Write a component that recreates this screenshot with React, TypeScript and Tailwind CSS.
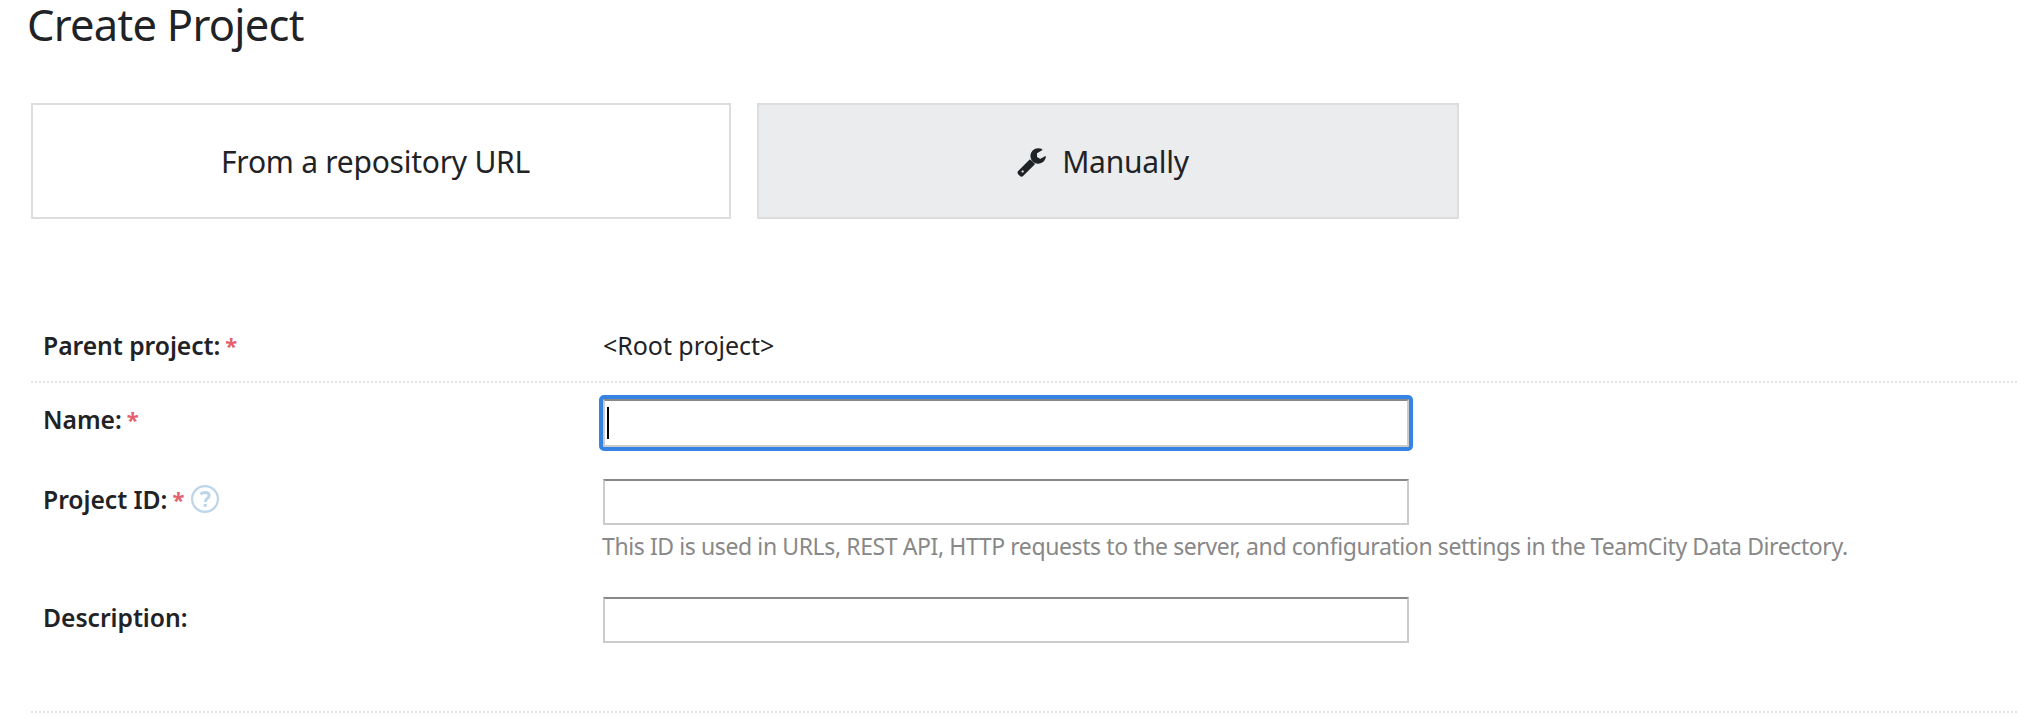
import type { ReactNode } from "react";

function WrenchIcon() {
  return (
    <svg viewBox="0 0 1792 1792" className="h-[31px] w-[31px] shrink-0 fill-[#1f2326]" aria-hidden="true">
      <path d="M448 1472q0-26-19-45t-45-19-45 19-19 45 19 45 45 19 45-19 19-45zm644-420l-682 682q-37 37-90 37-52 0-91-37l-106-108q-38-36-38-90 0-53 38-91l681-681q39 98 114.500 173.500t173.500 114.500zm634-435q0 39-23 106-47 134-164.500 217.500t-258.500 83.500q-185 0-316.500-131.500t-131.500-316.500 131.500-316.500 316.500-131.500q58 0 121.500 16.500t107.500 46.500q16 11 16 28t-16 28l-293 169v224l193 107q5-3 79-48.500t135.500-81 70.500-35.500q15 0 23.500 10t8.500 25z" />
      <path d="M850 790l240 240l-130 80l-220-220z" />
    </svg>
  );
}

function HelpIcon() {
  return (
    <svg viewBox="0 0 28 28" className="h-7 w-7 shrink-0 fill-none stroke-[#bdd5e8]" aria-hidden="true">
      <circle cx="14" cy="14" r="12.900" strokeWidth="2.200" />
      <path d="M9.500 9.200Q11.500 7.400 14.200 7.400Q18.200 7.400 18.200 10.500Q18.200 12.300 16.200 13.600Q14.300 14.900 14.300 17" strokeWidth="3" />
      <path d="M14.200 18.800v3" strokeWidth="3.200" />
    </svg>
  );
}

function Divider() {
  return <div className="h-[2px] bg-[repeating-linear-gradient(90deg,#e4e4e4_0px_2px,transparent_2px_4px)]" />;
}

function Label({ children, required, help, className = "" }: { children: ReactNode; required?: boolean; help?: boolean; className?: string }) {
  return (
    <div className={`flex w-[572px] shrink-0 items-start pl-3 text-[24.7px] leading-[34px] font-semibold tracking-[-0.05px] whitespace-nowrap ${className}`}>
      <span>{children}</span>
      {required && <span className="ml-[5px] text-[22px] leading-[33px] font-bold text-[#e4606d]">*</span>}
      {help && <span className="mt-[2px] ml-[7px]"><HelpIcon /></span>}
    </div>
  );
}

const field = "w-[806px] border-2 border-[#cbcbcb] border-t-[#888888] bg-white";

export default function App() {
  return (
    <main className="h-[716px] overflow-hidden bg-white pl-[31px] font-['Noto_Sans',sans-serif] text-[#1f2326]">
      <h1 className="-ml-[4px] text-[43.5px] leading-[48px] tracking-[-0.75px]">Create Project</h1>

      <div className="mt-[55px] flex gap-[26px] text-[30px] tracking-[-0.25px]">
        <button className="flex h-[116px] w-[700px] items-center justify-center border-2 border-[#dddddd] pr-[11px]">
          From a repository URL
        </button>
        <button className="flex h-[116px] w-[702px] items-center justify-center gap-[15px] border-2 border-[#dddddd] bg-[#ebecee] pr-[11px]">
          <WrenchIcon />
          Manually
        </button>
      </div>

      <form className="mt-[109px]">
        <div className="flex h-[53px]">
          <Label required className="pt-px">Parent project:</Label>
          <div className="text-[25px] leading-[34px] tracking-[-0.05px]">&lt;Root project&gt;</div>
        </div>
        <Divider />
        <div className="flex h-24 pt-4">
          <Label required className="pt-1">Name:</Label>
          <div className={`${field} flex h-12 items-center rounded-[1px] pl-[2px] outline-4 outline-[#3584e4]`}>
            <span className="h-8 w-[2px] bg-black" />
          </div>
        </div>
        <div className="flex h-[118px]">
          <Label required help className="pt-1">Project ID:</Label>
          <div>
            <div className={`${field} h-[46px]`} />
            <p className="mt-[5px] -ml-px text-[23px] leading-8 tracking-[-0.4px] whitespace-nowrap text-[#888888]">
              This ID is used in URLs, REST API, HTTP requests to the server, and configuration settings in the TeamCity Data Directory.
            </p>
          </div>
        </div>
        <div className="flex h-[114px]">
          <Label className="pt-1">Description:</Label>
          <div className={`${field} h-[46px]`} />
        </div>
        <Divider />
      </form>
    </main>
  );
}
